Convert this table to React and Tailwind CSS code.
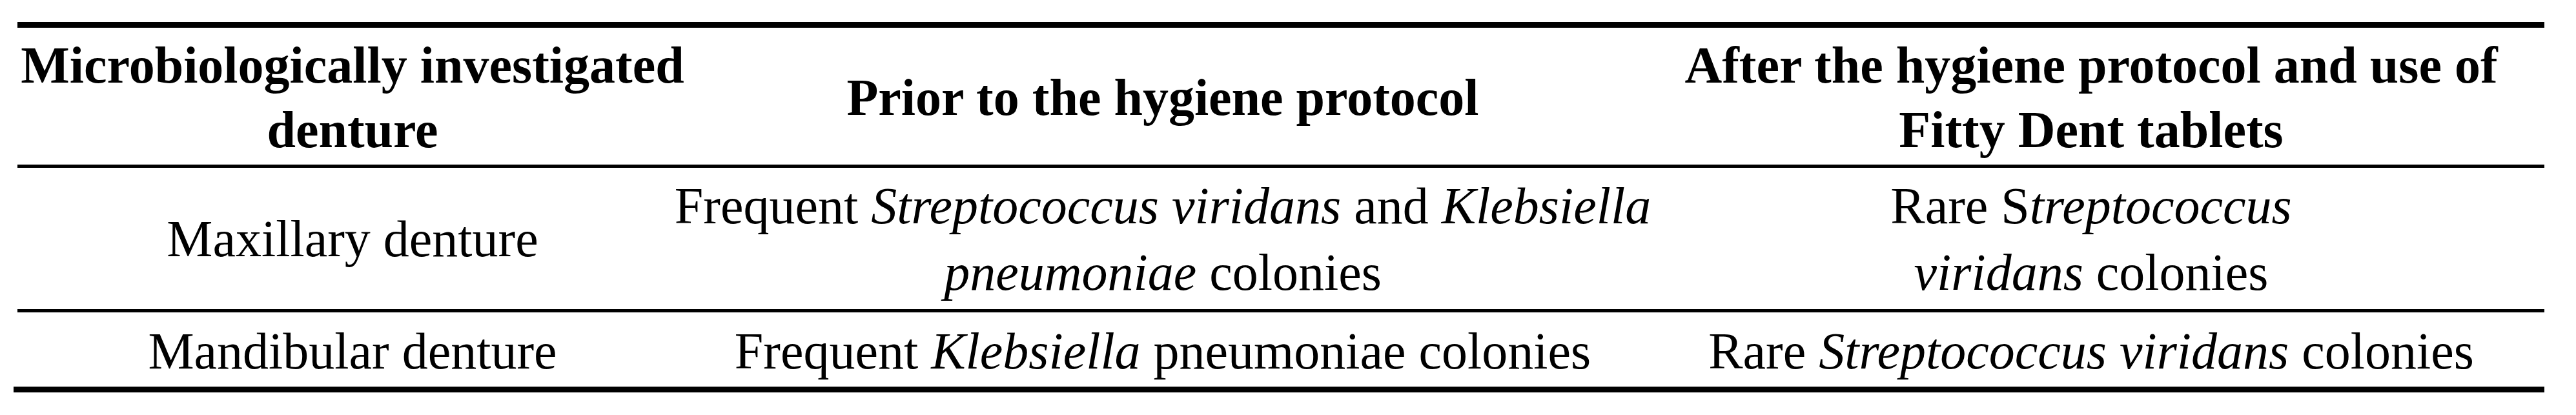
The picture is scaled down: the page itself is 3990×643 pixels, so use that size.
import React from "react";

const rows = [
  {
    name: "Maxillary denture",
    before: (
      <>
        Frequent <i>Streptococcus viridans</i> and <i>Klebsiella</i>
        <br />
        <i>pneumoniae</i> colonies
      </>
    ),
    after: (
      <>
        Rare S<i>treptococcus</i>
        <br />
        <i>viridans</i> colonies
      </>
    ),
    height: "h-[219px] pt-[2px]",
  },
  {
    name: "Mandibular denture",
    before: (
      <>
        Frequent <i>Klebsiella</i> pneumoniae colonies
      </>
    ),
    after: (
      <>
        Rare <i>Streptococcus viridans</i> colonies
      </>
    ),
    height: "h-[115px] pt-[6px]",
  },
];

const Cell = ({ children, className = "" }) => (
  <div className={`flex items-center justify-center text-center whitespace-nowrap ${className}`}>
    <div className="shrink-0">{children}</div>
  </div>
);

export default function App() {
  return (
    <div className="w-[3990px] h-[643px] bg-white text-black pt-[34px] pl-[27px] font-['Liberation_Serif',serif] text-[80px]">
      <div className="w-[3914px]">
        <div className="h-[9px] bg-black" />

        {/* header */}
        <div className="grid grid-cols-[1038px_1472px_1404px] h-[212px] pt-[4px] font-bold leading-[100px]">
          <Cell>
            Microbiologically investigated
            <br />
            denture
          </Cell>
          <Cell>Prior to the hygiene protocol</Cell>
          <Cell>
            After the hygiene protocol and use of
            <br />
            Fitty Dent tablets
          </Cell>
        </div>
        <div className="h-[5px] bg-black" />

        {rows.map((row, i) => (
          <div key={row.name}>
            <div className={`grid grid-cols-[1038px_1472px_1404px] leading-[103px] ${row.height}`}>
              <Cell>{row.name}</Cell>
              <Cell>{row.before}</Cell>
              <Cell>{row.after}</Cell>
            </div>
            {i < rows.length - 1 && <div className="h-[5px] bg-black" />}
          </div>
        ))}

        <div className="h-[9px] bg-black -ml-[6px]" />
      </div>
    </div>
  );
}
